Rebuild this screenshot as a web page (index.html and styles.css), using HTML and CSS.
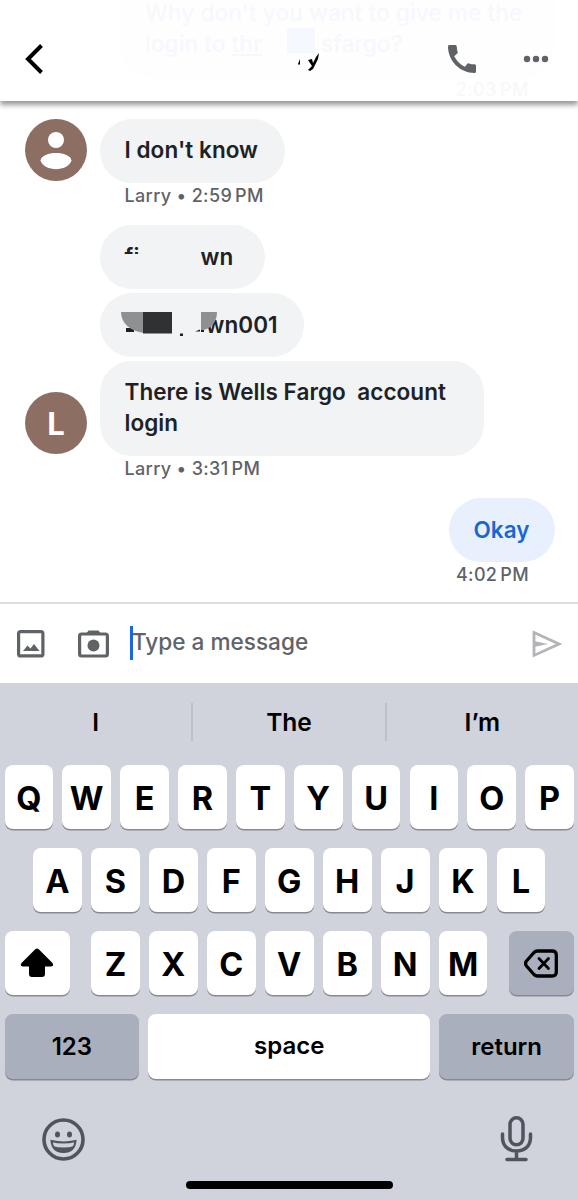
FILE: index.html
```
<!DOCTYPE html>
<html lang="en">
  <head>
    <meta charset="utf-8">
    <title>Messages</title>
    <link rel="stylesheet" href="styles.css">
  </head>
  <body>
    <header class="topbar">
      <div class="ghost">
        <div class="ghost-bubble">
          <span class="g1">Why don't you want to give me the</span>
          <span class="g2">login to <u>thr</u><i></i>sfargo?</span>
        </div>
        <div class="ghost-time">2:03<span class="pm">PM</span></div>
      </div>
      <svg class="back" width="20" height="34" viewBox="0 0 20 34"><path d="M17.500 3.500L4 17L17.500 30.500" fill="none" stroke="#000" stroke-width="4"/></svg>
      <svg class="name" width="24" height="20" viewBox="0 0 24 20"><path d="M4 6L2 11L3 12L4 11ZM12 7L16 6L17 10L20 4L23 0L22 6L17 16L14 18L12 17L16 13Z"/></svg>
      <svg class="phone" width="28" height="28" viewBox="3 3 18 18"><path fill="#5f6368" d="M20.01 15.38c-1.23 0-2.42-.2-3.53-.56-.35-.12-.74-.03-1.01.24l-1.57 1.97c-2.83-1.35-5.48-3.9-6.89-6.83l1.95-1.66c.27-.28.35-.67.24-1.02-.37-1.11-.56-2.3-.56-3.53 0-.54-.45-.99-.99-.99H4.19C3.65 3 3 3.24 3 3.99 3 13.28 10.73 21 20.01 21c.71 0 .99-.63.99-1.18v-3.45c0-.54-.45-.99-.99-.99z"/></svg>
      <svg class="more" width="26" height="8" viewBox="0 0 26 8" fill="#5f6368"><circle cx="4" cy="4" r="3.200"/><circle cx="13" cy="4" r="3.200"/><circle cx="22" cy="4" r="3.200"/></svg>
    </header>

    <main class="chat">
      <div class="row">
        <svg class="avatar" width="62" height="62" viewBox="0 0 62 62"><circle cx="31" cy="31" r="31" fill="#8d6e63"/><circle cx="31" cy="21" r="8" fill="#fff"/><path d="M15.500 41.500C17 31.500 45 31.500 46.500 41.500C43 53 19 53 15.500 41.500Z" fill="#fff"/></svg>
        <div class="bubble b1"><span>I don't know</span></div>
      </div>
      <div class="meta">Larry • 2:59<span class="pm">PM</span></div>
      <div class="bubble b2"><span class="covered">fi</span><span>wn</span></div>
      <div class="bubble b3">
        <svg class="patch" width="98" height="26" viewBox="0 0 98 26">
          <path d="M6 17H14V21H6Z" fill="#202124"/>
          <path d="M1 1H24V22C10 20 1 12 1 1Z" fill="#8f9092"/>
          <path d="M23 1H52V22.500H23Z" fill="#303133"/>
          <path d="M60 22.500h3v2.500h-3zM75 20.500l5-2v2zM81 18.500h3v2.500h-3z" fill="#202124"/>
        </svg>
        <span>wn001</span>
        <svg class="wedge" width="17" height="19" viewBox="0 0 17 19"><path d="M0 0H16C16 11 9 18 0 18Z" fill="#8f9092"/></svg>
      </div>
      <div class="row end">
        <div class="avatar letter">L</div>
        <div class="bubble b4"><span>There is Wells Fargo&nbsp; account<br>login</span></div>
      </div>
      <div class="meta">Larry • 3:31<span class="pm">PM</span></div>
      <div class="bubble own"><span>Okay</span></div>
      <div class="meta own-meta">4:02<span class="pm">PM</span></div>
    </main>

    <div class="composer">
      <svg width="28" height="28" viewBox="0 0 28 28"><rect x="1.600" y="1.600" width="24.300" height="24.300" rx="2" fill="none" stroke="#5f6368" stroke-width="3.200"/><path d="M6 21L10.500 15.500L13.500 18.500L17 14L22.500 21Z" fill="#5f6368"/></svg>
      <svg class="camera" width="31" height="28" viewBox="0 0 31 28"><path d="M8 4L10.500 0.500H20.500L23 4Z" fill="#5f6368"/><rect x="1.600" y="4" width="27.800" height="22" rx="2" fill="none" stroke="#5f6368" stroke-width="3.200"/><circle cx="15.500" cy="15.500" r="6" fill="#5f6368"/></svg>
      <div class="input"><span>Type a message</span></div>
      <svg class="send" width="30" height="28" viewBox="0 0 30 28"><path d="M2 2.600L27 14L2 25.400Z" fill="none" stroke="#b4b5b8" stroke-width="2.800"/><path d="M2 11L16 14L2 17Z" fill="#b4b5b8"/></svg>
    </div>

    <div class="keyboard">
      <div class="suggest"><span>I</span><span>The</span><span>I’m</span></div>
      <div class="keys">
        <b>Q</b><b>W</b><b>E</b><b>R</b><b>T</b><b>Y</b><b>U</b><b>I</b><b>O</b><b>P</b>
      </div>
      <div class="keys">
        <b>A</b><b>S</b><b>D</b><b>F</b><b>G</b><b>H</b><b>J</b><b>K</b><b>L</b>
      </div>
      <div class="keys">
        <b class="shift"><svg width="34" height="30" viewBox="0 0 34 30"><path d="M15 1.500Q17 -.5 19 1.500L32.500 15Q34.500 18.500 31 18.500H25V26Q25 29 22 29H12Q9 29 9 26V18.500H3Q-.5 18.500 1.500 15Z"/></svg></b>
        <b>Z</b><b>X</b><b>C</b><b>V</b><b>B</b><b>N</b><b>M</b>
        <b class="delete"><svg width="34" height="29" viewBox="0 0 34 29" fill="none" stroke="#000" stroke-width="3.300" stroke-linejoin="round" stroke-linecap="round"><path d="M13.500 2H28Q32.300 2 32.300 6V23Q32.300 27 28 27H13.500Q11.500 27 10 25.500L2.500 17Q.5 14.500 2.500 12L10 3.500Q11.500 2 13.500 2Z"/><path stroke-width="2.800" d="M15 9.500L24.500 19.500M24.500 9.500L15 19.500"/></svg></b>
      </div>
      <div class="keys words">
        <b class="grey">123</b><b class="space">space</b><b class="grey">return</b>
      </div>
      <div class="bottom">
        <svg width="43" height="43" viewBox="0 0 43 43"><circle cx="21.500" cy="21.500" r="19.500" fill="none" stroke="#50545d" stroke-width="3.600"/><ellipse cx="15.500" cy="16.500" rx="2.500" ry="3" fill="#50545d"/><ellipse cx="27.500" cy="16.500" rx="2.500" ry="3" fill="#50545d"/><path d="M9.500 23Q21.500 26 33.500 23Q32.500 34 21.500 34Q10.500 34 9.500 23Z" fill="none" stroke="#50545d" stroke-width="2"/><path d="M10.500 28Q21.500 31 32.500 28Q29.500 34.500 21.500 34.500Q13.500 34.500 10.500 28Z" fill="#50545d"/></svg>
        <svg width="33" height="47" viewBox="0 0 33 47" fill="none" stroke="#50545d" stroke-width="3.500" stroke-linecap="round"><rect x="10" y="1.800" width="13" height="27" rx="6.500"/><path d="M2.500 18V21.500C2.500 30.500 9 35 16.500 35S30.500 30.500 30.500 21.500V18M16.500 35V43M7 43.500H26"/></svg>
      </div>
      <div class="home"></div>
    </div>
  </body>
</html>
```
FILE: styles.css
```
* { box-sizing: border-box; }
body {
  margin: 0;
  width: 578px;
  height: 1200px;
  overflow: hidden;
  background: #fff;
  font-family: Inter, "Liberation Sans", sans-serif;
  font-weight: 500;
  color: #202124;
}
svg { display: block; flex: none; }
.topbar {
  position: relative;
  height: 101px;
  padding: 17px 29px 0 21px;
  display: flex;
  align-items: center;
  background: #fff;
  box-shadow: 0 4px 5px rgba(0, 0, 0, .4);
}
.topbar > svg { position: relative; }
.back { margin-left: 3px; }
.name { margin: 8px 0 0 252px; }
.phone { margin-left: 128px; }
.more { margin-left: 47px; }

/* message scrolled under the translucent bar */
.ghost {
  position: absolute;
  top: 0;
  left: 120px;
  width: 435px;
  font-size: 22.800px;
  color: #f6f8fd;
}
.ghost-bubble {
  height: 78px;
  padding: 0 25px;
  line-height: 31px;
  background: #fefeff;
  border-radius: 0 0 32px 32px;
}
.ghost-bubble span {
  display: flex;
  position: relative;
  top: -3px;
  white-space: pre;
}
.ghost-bubble i {
  width: 28px;
  height: 25px;
  margin: 0 6px 0 25px;
  background: #f5f8fe;
}
.ghost-time {
  font-size: 18px;
  line-height: 24px;
  padding-right: 26px;
  text-align: right;
  color: #f8f8f8;
  letter-spacing: .5px;
}

.chat {
  height: 501px;
  padding: 17.500px 23px 0 99.500px;
  display: flex;
  flex-direction: column;
  align-items: flex-start;
}
.chat > * { flex: none; }
.row {
  display: flex;
  align-items: center;
  gap: 12px;
  margin-left: -74.500px;
}
.row.end { align-items: flex-end; }
.avatar { flex: none; }
.row:first-child .avatar { margin-top: -1px; }
.letter {
  width: 62px;
  height: 62px;
  margin-bottom: 2px;
  border-radius: 50%;
  background: #8d6e63;
  color: #fff;
  font-size: 31px;
  font-weight: 700;
  line-height: 64px;
  text-align: center;
}
.bubble {
  position: relative;
  display: flex;
  align-items: center;
  height: 64px;
  padding: 0 0 2px 25px;
  border-radius: 32px;
  background: #f1f3f4;
  font-size: 22.500px;
  font-weight: 600;
  letter-spacing: .06px;
  line-height: 31px;
  white-space: nowrap;
}
.row .bubble { margin-left: .5px; }
.b1 { width: 185px; padding-bottom: 3px; }
.b2 { width: 165px; margin-bottom: 4px; }
.b3 { width: 204px; margin-bottom: 4px; padding-left: 20px; }
.b4 { width: 384px; height: 94.500px; }
.covered {
  position: relative;
  width: 76px;
}
.covered::after {
  content: "";
  position: absolute;
  left: 0;
  right: 0;
  top: 13px;
  bottom: 0;
  background: #f1f3f4;
}
.patch { margin-right: -12px; }
.wedge {
  position: absolute;
  left: 101px;
  top: 19px;
}
.meta {
  padding-left: 25px;
  height: 42.500px;
  line-height: 26px;
  font-size: 18px;
  color: #5f6368;
  letter-spacing: .35px;
}
.pm { margin-left: 3px; }
.own {
  align-self: flex-end;
  width: 106.500px;
  background: #e8f0fe;
  color: #1967d2;
}
.own-meta {
  align-self: flex-end;
  padding: 0 26px 0 0;
}

.composer {
  height: 81px;
  border-top: 2px solid #dcdddf;
  padding: 1px 16px 0 17px;
  display: flex;
  align-items: center;
}
.camera { margin-left: 32.500px; }
.input {
  flex: 1;
  height: 34px;
  margin: -2px 0 0 21.500px;
  border-left: 3px solid #1a67e0;
  font-size: 22.600px;
  line-height: 31px;
  color: #5f6368;
}
.input span { margin-left: -1px; }

.keyboard {
  height: 517px;
  background: #d0d3dc;
  color: #000;
  padding: 20px 4px 0 4.500px;
}
.suggest {
  display: flex;
  height: 38px;
  margin: 0 -4px 23.500px -4.500px;
  font-size: 24.500px;
  font-weight: 600;
  line-height: 39px;
  text-align: center;
}
.suggest span { flex: 1; }
.suggest span + span { border-left: 2px solid #bcc0c9; }
.keys {
  display: flex;
  justify-content: center;
  gap: 9.150px;
  margin-bottom: 19px;
}
.keys b {
  width: 48.800px;
  height: 64.300px;
  display: flex;
  align-items: center;
  justify-content: center;
  padding-top: 3px;
  border-radius: 8px;
  background: #fff;
  box-shadow: 0 1.500px 0 #898a8d;
  font-size: 32.500px;
  font-weight: 700;
}
.keys .shift { width: 65px; margin-right: 12px; padding: 0; }
.keys .delete { width: 65px; margin-left: 12px; padding: 0; }
.keys .delete, .keys .grey { background: #a9afbc; }
.keys .grey { width: 134.500px; padding: 0 0 1px; }
.keys .space { width: 282px; padding: 0 0 3px; }
.keys.words b { font-size: 24px; font-weight: 600; }
.bottom {
  display: flex;
  justify-content: space-between;
  align-items: center;
  padding: 18px 41px 0 37.500px;
}
.home {
  width: 207px;
  height: 8px;
  margin: 18px auto 0;
  border-radius: 4px;
  background: #000;
}
```
